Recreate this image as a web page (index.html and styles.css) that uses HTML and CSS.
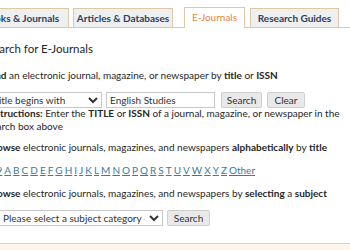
FILE: index.html
```html
<!DOCTYPE html>
<html lang="en">
<head>
    <meta charset="UTF-8">
    <meta name="viewport" content="width=device-width, initial-scale=1.0">
    <title>E-Journals</title>
    <link rel="stylesheet" href="styles.css">
</head>
<body>
    <div class="page">
        <ul class="tabs">
            <li class="tab books"><a href="#">Books &amp; Journals</a></li>
            <li class="tab articles"><a href="#">Articles &amp; Databases</a></li>
            <li class="tab active"><a href="#">E-Journals</a></li>
            <li class="tab guides"><a href="#">Research Guides</a></li>
        </ul>

        <div class="content">
            <h2>Search for E-Journals</h2>

            <p class="lead"><b>Find</b> an electronic journal, magazine, or newspaper by <b>title</b> or <b>ISSN</b></p>
            <form class="search-row">
                <select class="type-select">
                    <option>Title begins with</option>
                </select>
                <input type="text" class="query" value="English Studies">
                <button type="button" class="btn search-btn">Search</button>
                <button type="button" class="btn clear-btn">Clear</button>
            </form>
            <p class="help"><b>Instructions:</b> Enter the <b>TITLE</b> or <b>ISSN</b> of a journal, magazine, or newspaper in the search box above</p>

            <p class="lead browse"><b>Browse</b> electronic journals, magazines, and newspapers <b>alphabetically</b> by <b>title</b></p>
            <div class="letters">
                <a href="#">0-9</a><a href="#">A</a><a href="#">B</a><a href="#">C</a><a href="#">D</a><a href="#">E</a><a href="#">F</a><a href="#">G</a><a href="#">H</a><a href="#">I</a><a href="#">J</a><a href="#">K</a><a href="#">L</a><a href="#">M</a><a href="#">N</a><a href="#">O</a><a href="#">P</a><a href="#">Q</a><a href="#">R</a><a href="#">S</a><a href="#">T</a><a href="#">U</a><a href="#">V</a><a href="#">W</a><a href="#">X</a><a href="#">Y</a><a href="#">Z</a><a href="#">Other</a>
            </div>

            <p class="lead browse"><b>Browse</b> electronic journals, magazines, and newspapers by <b>selecting</b> a <b>subject</b></p>
            <form class="search-row">
                <select class="subject-select">
                    <option>-- Please select a subject category --</option>
                </select>
                <button type="button" class="btn subject-btn">Search</button>
            </form>
        </div>
        <div class="foot"></div>
    </div>
</body>
</html>
```

FILE: styles.css
```css
html, body {
    margin: 0;
    padding: 0;
    background-color: #fff;
    font-family: "Lato", Arial, sans-serif;
    font-size: 10px;
    line-height: 13px;
    color: #262626;
    overflow: hidden;
}

.page {
    margin-left: -22px;
    padding-top: 7px;
    width: 373px;
}

.tabs {
    list-style: none;
    margin: 0 0 0 -5px;
    padding: 0;
    display: flex;
    gap: 4px;
    align-items: flex-end;
    border-bottom: 1px solid #dfc8aa;
    height: 20px;
}

.tab {
    height: 19px;
    box-sizing: border-box;
    border: 1px solid #dfc8aa;
    border-bottom: none;
    background-color: #efefef;
    display: flex;
    align-items: center;
    justify-content: center;
    white-space: nowrap;
    font-size: 10px;
}

.tab a {
    color: #28415f;
    font-weight: bold;
    text-decoration: none;
}

.books {
    width: 96px;
}

.articles {
    width: 100px;
}

.guides {
    width: 89px;
}

.tab.active {
    width: 61px;
    background-color: #fff;
    height: 21px;
    margin-bottom: -1px;
    margin-left: 7px;
    margin-right: 1px;
    padding-bottom: 1px;
}

.tab.active a {
    color: #e5844a;
    font-weight: normal;
}

.content {
    padding-left: 9px;
}

h2 {
    font-size: 11.5px;
    line-height: 16px;
    font-weight: normal;
    margin: 13px 0 0 0;
}

.lead {
    margin: 12px 0 0 0;
}

.lead.browse {
    margin-top: 8px;
}

.search-row {
    display: flex;
    gap: 4px;
    align-items: center;
    margin: 10px 0 0 0;
}

select, input, .btn {
    font-family: inherit;
    font-size: 10px;
    color: #333;
    height: 16px;
    box-sizing: border-box;
}

select {
    border: 1px solid #c8c8c8;
    background-color: #fff;
    padding: 0 1px;
}

.type-select {
    width: 115px;
}

.query {
    width: 109px;
    border: 1px solid #c8c8c8;
    padding: 0 3px;
    margin-right: 2px;
}

.btn {
    border: 1px solid #cfcfcf;
    background-color: #e9e9e9;
    padding: 0;
    border-radius: 2px;
}

.search-btn {
    width: 41px;
}

.clear-btn {
    width: 38px;
    margin-left: 1px;
}

.help {
    margin: -1px 0 0 0;
}

.letters {
    margin: 10px 0 0 0;
    display: flex;
    gap: 2px;
}

.letters + .lead.browse {
    margin-top: 10px;
}

.letters a {
    color: #3b7d97;
}

.subject-select {
    width: 176px;
}

.subject-btn {
    width: 43px;
}

.foot {
    margin-top: 17px;
    border-top: 1px solid #e9cfb2;
    height: 10px;
    background-color: #fdf4ea;
}
```
